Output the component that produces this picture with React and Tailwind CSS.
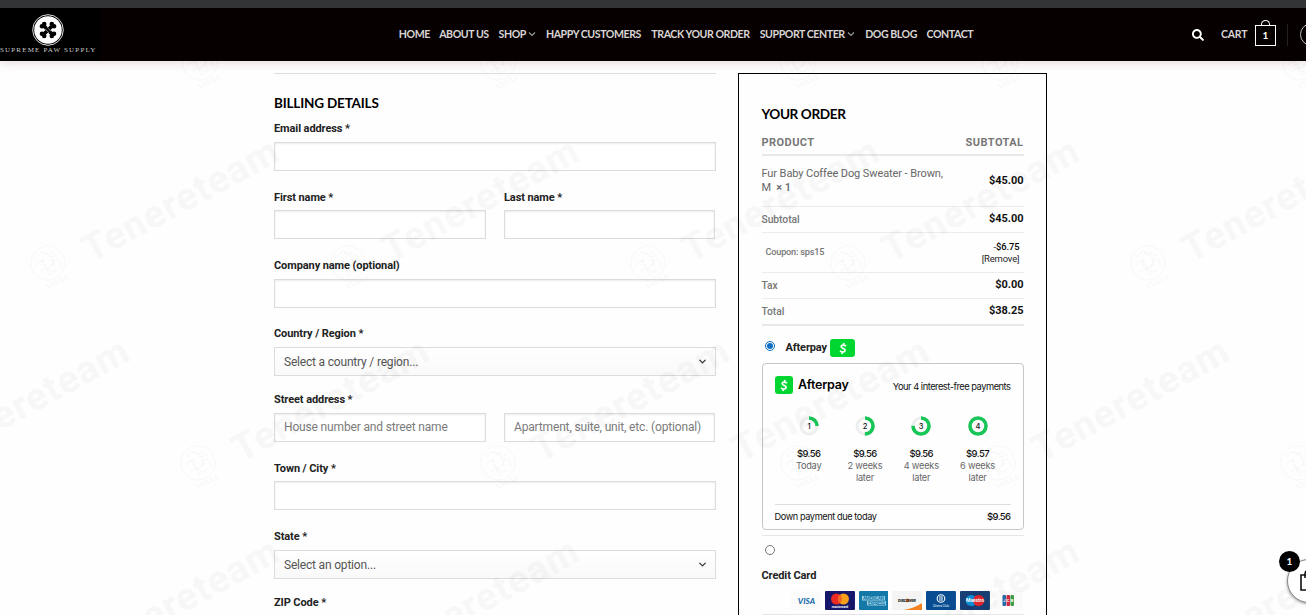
import { FaSearch } from 'react-icons/fa'
import { ChevronDown } from 'lucide-react'

const navItems = [
  { label: 'HOME', width: 'w-[30px]' },
  { label: 'ABOUT US', width: 'w-[49px]' },
  { label: 'SHOP', width: 'w-[27px]', menu: true },
  { label: 'HAPPY CUSTOMERS', width: 'w-[95px]' },
  { label: 'TRACK YOUR ORDER', width: 'w-[98px]' },
  { label: 'SUPPORT CENTER', width: 'w-[85px]', menu: true },
  { label: 'DOG BLOG', width: 'w-[51px]' },
  { label: 'CONTACT', width: 'w-[47px]' },
]

const payments = [
  { n: 1, amount: '$9.56', when: 'Today' },
  { n: 2, amount: '$9.56', when: '2 weeks', later: true },
  { n: 3, amount: '$9.56', when: '4 weeks', later: true },
  { n: 4, amount: '$9.57', when: '6 weeks', later: true },
]

const seals = [
  [200, 63], [498, 63], [798, 63], [1000, 63], [1300, 63],
  [48, 263], [348, 263], [648, 263], [848, 263], [1148, 263],
  [198, 463], [498, 463], [798, 463], [998, 463], [1298, 463],
]

const marks = [
  [91, 263], [391, 263], [691, 263], [891, 263], [1191, 263],
  [-59, 463], [241, 463], [541, 463], [741, 463], [1041, 463],
  [91, 663], [391, 663], [891, 663], [1191, 663],
]

function Watermark() {
  return (
    <svg className="pointer-events-none absolute left-0 top-[61px]" width="1306" height="554" viewBox="0 61 1306 554">
      {marks.map(([x, y]) => (
        <text key={`${x}-${y}`} x={x} y={y} transform={`rotate(-28.5 ${x} ${y})`} textLength="217" fontSize="38" fontWeight="700" fontFamily="Roboto, sans-serif" fill="#000" opacity="0.024">
          Tenereteam
        </text>
      ))}
      {seals.map(([x, y]) => (
        <g key={`${x}-${y}`} transform={`translate(${x} ${y})`} fill="none" stroke="#000" strokeWidth="1" opacity="0.035">
          <circle r="17" strokeDasharray="2 1" />
          <path d="M-11 -6q4 -8 10 -3t10 0M-12 2q6 -8 9 0t8 -2 8 4M-7 9q4 -7 8 -2t8 -1M-4 -11q4 3 9 0M-5 -4v7M4 -5l2 8M-2 6l4 7" strokeDasharray="4 1" />
          <path d="M-2 23l22 -11M0 25l20 -10" strokeDasharray="3 2" />
        </g>
      ))}
    </svg>
  )
}

function Header() {
  return (
    <header className="relative z-10 border-t-8 border-[#333435] bg-[#060000] shadow-[0_1px_10px_rgba(90,20,20,0.18)]">
      <div className="flex h-[53px] items-center overflow-hidden font-[Lato,sans-serif] text-[10.6px] font-bold text-[#d9d5d5]">
        <div className="flex h-full w-[100px] shrink-0 flex-col bg-black pt-[6px]">
          <svg width="32" height="32" viewBox="0 0 32 32" className="ml-8 shrink-0">
            <circle cx="16" cy="16" r="15.3" fill="#000" stroke="#ddd" strokeWidth="1" />
            <circle cx="16" cy="16" r="13.8" fill="#fff" />
            <path d="M11 11l10 10M21 11l-10 10" stroke="#000" strokeWidth="3.8" />
            <g fill="#000">
              <circle cx="10" cy="12.2" r="2.3" /><circle cx="12.2" cy="10" r="2.3" />
              <circle cx="19.8" cy="10" r="2.3" /><circle cx="22" cy="12.2" r="2.3" />
              <circle cx="10" cy="19.8" r="2.3" /><circle cx="12.2" cy="22" r="2.3" />
              <circle cx="19.8" cy="22" r="2.3" /><circle cx="22" cy="19.8" r="2.3" />
            </g>
            <path d="M13 14.8l4.2 4.2M14.8 13l4.2 4.2" stroke="#fff" strokeWidth=".5" />
          </svg>
          <span className="mt-px whitespace-nowrap font-['Liberation_Serif',serif] text-[7px] font-normal leading-[7px] tracking-[1.17px] text-[#c8c8c8]">SUPREME PAW SUPPLY</span>
        </div>
        <nav className="ml-[298.8px] flex shrink-0 items-center gap-[10.4px]">
          {navItems.map((item) => (
            <a key={item.label} href="#" className="flex shrink-0 items-center whitespace-nowrap tracking-[-0.44px]">
              <span className={item.width}>{item.label}</span>
              {item.menu && (
                <svg className="ml-[2px] shrink-0" width="8" height="6" viewBox="0 0 8 6" fill="none" stroke="#999" strokeWidth="1.2">
                  <path d="M1 1.5l3 3 3-3" />
                </svg>
              )}
            </a>
          ))}
        </nav>
        <div className="ml-auto flex w-[115px] shrink-0 items-center">
          <FaSearch className="ml-px h-3 w-3 shrink-0 text-white" />
          <span className="ml-[17px] w-[26px] shrink-0 text-[10.5px] tracking-[-0.2px]">CART</span>
          <div className="ml-2 flex shrink-0 flex-col items-center pb-1">
            <span className="h-[5px] w-[9px] rounded-t-full border border-b-0 border-white" />
            <span className="flex h-[21px] w-[21px] items-center justify-center border border-white text-[10px] text-white">1</span>
          </div>
          <span className="ml-[11px] h-[22px] w-px shrink-0 bg-[#222]" />
          <span className="ml-[12px] h-[23px] w-[23px] shrink-0 rounded-full border border-[#bbb]" />
        </div>
      </div>
    </header>
  )
}

const inputClass = 'h-[29px] w-full border border-[#dcdcdc] bg-white px-[9px] pb-[2px] text-[12px] tracking-[-0.16px] text-[#555] shadow-[inset_0_1px_2px_rgba(0,0,0,0.08)] placeholder:text-[#7b7b7b]'

function Field({ label, className, children }) {
  return (
    <div className={`flex flex-col justify-between ${className}`}>
      <label className="whitespace-nowrap pt-px text-[11px] font-bold leading-4 tracking-[-0.09px] text-[#222]">{label}</label>
      {children}
    </div>
  )
}

function SelectBox({ text }) {
  return (
    <button className="flex h-[29px] w-full items-center justify-between border border-[#dcdcdc] bg-linear-to-b from-white to-[#f9f9f9] pl-[9px] pr-[7px] text-[12px] tracking-[-0.19px] text-[#555]">
      {text}
      <ChevronDown className="h-[11px] w-[11px] text-[#333]" strokeWidth={2.7} />
    </button>
  )
}

function BillingForm() {
  return (
    <section className="w-[442px] shrink-0 border-t border-[#dedede]">
      <h3 className="mt-[19px] h-[27px] font-[Lato,sans-serif] text-[13.5px] font-bold leading-[20px] tracking-[-0.18px] text-black">BILLING DETAILS</h3>
      <Field label="Email address *" className="h-[51px]"><input className={inputClass} /></Field>
      <div className="mt-[18px] flex gap-[18px]">
        <Field label="First name *" className="h-[50px] w-[212px]"><input className={inputClass} /></Field>
        <Field label="Last name *" className="h-[50px] w-[211px]"><input className={inputClass} /></Field>
      </div>
      <Field label="Company name (optional)" className="mt-[18px] h-[51px]"><input className={inputClass} /></Field>
      <Field label="Country / Region *" className="mt-[17px] h-[51px]"><SelectBox text="Select a country / region..." /></Field>
      <div className="mt-[15px] flex items-end gap-[18px]">
        <Field label="Street address *" className="h-[51px] w-[212px]"><input className={inputClass} placeholder="House number and street name" /></Field>
        <input className={`${inputClass} max-w-[211px]`} placeholder="Apartment, suite, unit, etc. (optional)" />
      </div>
      <Field label="Town / City *" className="mt-[18px] h-[50px]"><input className={inputClass} /></Field>
      <Field label="State *" className="mt-[18px] h-[51px]"><SelectBox text="Select an option..." /></Field>
      <Field label="ZIP Code *" className="mt-[15px] h-[51px]"><input className={inputClass} /></Field>
    </section>
  )
}

function TotalRow({ label, value, className }) {
  return (
    <div className={`flex items-center justify-between border-b ${className}`}>
      <span className="text-[10.3px] font-medium tracking-[-0.05px] text-[#777]">{label}</span>
      <span className="text-[11px] font-bold tracking-[-0.05px] text-[#111]">{value}</span>
    </div>
  )
}

function CashIcon({ width, height }) {
  return (
    <span className={`flex shrink-0 items-center justify-center rounded-[3px] bg-[#00d632] ${width} ${height}`}>
      <svg width="10" height="13" viewBox="0 0 10 13" fill="none" stroke="#fff" strokeWidth="1.7">
        <path d="M8 4.2C6.6 2.9 3.4 2.6 3.1 4.5c-.3 2.2 4.2 1.5 4 3.9-.2 2-3.3 2.1-5.1.5M5.9 1l-.4 1.8M4.3 10.2 3.9 12" />
      </svg>
    </span>
  )
}

function Installment({ n, amount, when, later }) {
  const length = 2 * Math.PI * 8
  return (
    <div className="flex w-[56.3px] shrink-0 flex-col items-center text-center">
      <svg width="20" height="20" viewBox="0 0 20 20">
        <circle cx="10" cy="10" r="8" fill="none" stroke="#eee" strokeWidth="3" />
        <circle cx="10" cy="10" r="8" fill="none" stroke="#18c557" strokeWidth="3.6" strokeDasharray={`${(length * n) / 4} ${length}`} transform="rotate(-90 10 10)" />
        <text x="10" y="13" textAnchor="middle" fontSize="7.5" fontWeight="500" fill="#111">{n}</text>
      </svg>
      <p className="mt-3 text-[9.5px] font-medium leading-[12px] tracking-[-0.6px] text-[#111]">{amount}</p>
      <p className="whitespace-nowrap text-[9.2px] leading-[12px] tracking-[-0.2px] text-[#666]">
        {when}
        {later && <><br />later</>}
      </p>
    </div>
  )
}

function AfterpayCard() {
  return (
    <div className="mt-[5px] h-[167px] w-[262px] rounded border border-[#c6c6c6] px-3 font-[Inter,sans-serif]">
      <div className="mt-3 flex h-[18px] items-center">
        <CashIcon width="w-[18px]" height="h-[18px]" />
        <span className="ml-[5.5px] mt-px text-[12.5px] font-semibold tracking-[-0.22px] text-black">Afterpay</span>
        <span className="ml-auto mt-[3px] whitespace-nowrap text-[9.3px] tracking-[-0.48px] text-[#111]">Your 4 interest-free payments</span>
      </div>
      <div className="ml-[6px] mt-[22px] flex h-[88px]">
        {payments.map((p) => <Installment key={p.n} {...p} />)}
      </div>
      <div className="flex h-[25px] items-center justify-between border-t border-[#ddd] text-[9.2px] tracking-[-0.41px] text-[#111]">
        <span>Down payment due today</span>
        <span className="text-[9.5px] font-medium tracking-[-0.6px]">$9.56</span>
      </div>
    </div>
  )
}

function CardLogos() {
  return (
    <div className="ml-[29.5px] mt-[6px] flex gap-[3.8px]">
      <svg width="30" height="19" viewBox="0 0 30 19">
        <rect width="30" height="19" rx="1" fill="#fbfbfb" />
        <text x="15.5" y="13" textAnchor="middle" fontFamily="Lato, sans-serif" fontSize="8.2" fontStyle="italic" fontWeight="900" fill="#1f6fae">VISA</text>
      </svg>
      <svg width="30" height="19" viewBox="0 0 30 19">
        <rect width="30" height="19" rx="1" fill="#16166b" />
        <circle cx="11.5" cy="8" r="5.5" fill="#eb2a23" />
        <circle cx="18.5" cy="8" r="5.5" fill="#f79e1b" />
        <path d="M15 3.8a5.5 5.5 0 0 1 0 8.4a5.5 5.5 0 0 1 0-8.4" fill="#f26322" />
        <text x="15" y="17" textAnchor="middle" fontSize="3.2" fontWeight="700" fill="#fff">mastercard</text>
      </svg>
      <svg width="30" height="19" viewBox="0 0 30 19">
        <rect width="30" height="19" rx="1" fill="#1479a8" />
        <rect x="3" y="5" width="23" height="4.5" fill="#9bd3e8" />
        <rect x="8" y="10" width="19" height="4.5" fill="#9bd3e8" />
        <text x="14.5" y="9" textAnchor="middle" textLength="21" fontSize="4.5" fontWeight="700" fill="#1479a8">AMERICAN</text>
        <text x="17.5" y="14" textAnchor="middle" textLength="17" fontSize="4.5" fontWeight="700" fill="#1479a8">EXPRESS</text>
      </svg>
      <svg width="30" height="19" viewBox="0 0 30 19">
        <rect width="30" height="19" rx="1" fill="#f4f4f4" />
        <path d="M12 19q11-2 18-7v7z" fill="#f58220" />
        <circle cx="15.5" cy="9.4" r="1.8" fill="#e9792b" />
        <text x="15" y="11" textAnchor="middle" textLength="18" fontSize="4" fontWeight="900" fill="#222">DISCOVER</text>
      </svg>
      <svg width="30" height="19" viewBox="0 0 30 19">
        <rect width="30" height="19" rx="1" fill="#0a4c92" />
        <circle cx="15" cy="7.5" r="3.8" fill="none" stroke="#fff" strokeWidth="1.1" />
        <path d="M14 5v5M16 5v5" stroke="#fff" strokeWidth="1" />
        <text x="15" y="16" textAnchor="middle" textLength="16" fontSize="3.6" fill="#dce9f5">Diners Club</text>
      </svg>
      <svg width="30" height="19" viewBox="0 0 30 19">
        <rect width="30" height="19" rx="1" fill="#173f75" />
        <circle cx="11.3" cy="9.5" r="5.6" fill="#0a8fd8" />
        <circle cx="18.7" cy="9.5" r="5.6" fill="#e2252b" />
        <text x="15" y="11.5" textAnchor="middle" textLength="18" fontSize="5" fontWeight="700" fill="#fff">Maestro</text>
      </svg>
      <svg width="30" height="19" viewBox="0 0 30 19">
        <rect width="30" height="19" rx="1" fill="#fafafa" />
        <rect x="8.5" y="4" width="3.5" height="11" rx="1" fill="#2667a8" />
        <rect x="12.5" y="4" width="3.5" height="11" rx="1" fill="#cf2540" />
        <rect x="16.5" y="4" width="3.5" height="11" rx="1" fill="#3d9b46" />
        <text x="14.3" y="10.8" textAnchor="middle" textLength="10" fontSize="4" fontWeight="700" fill="#fff">JCB</text>
      </svg>
    </div>
  )
}

function OrderBox() {
  return (
    <section className="ml-[22px] h-[600px] w-[309px] shrink-0 border border-black pl-[22.5px]">
      <h3 className="mt-[30px] font-[Lato,sans-serif] text-[13.6px] font-bold leading-[20px] tracking-[-0.4px] text-black">YOUR ORDER</h3>
      <div className="w-[262px]">
        <div className="flex h-[32px] items-center justify-between border-b-2 border-[#e9e9e9] pt-[9px] text-[11px] font-bold tracking-[0.45px] text-[#777]">
          <span>PRODUCT</span>
          <span>SUBTOTAL</span>
        </div>
        <div className="flex h-[51px] items-center justify-between border-b border-[#ececec]">
          <p className="w-[190px] text-[11px] leading-[14px] tracking-[-0.09px] text-[#666]">Fur Baby Coffee Dog Sweater - Brown, M &nbsp;<strong className="font-medium">× 1</strong></p>
          <span className="text-[11px] font-bold tracking-[-0.05px] text-[#111]">$45.00</span>
        </div>
        <TotalRow label="Subtotal" value="$45.00" className="h-[26px] border-[#ececec]" />
        <div className="flex h-[40px] items-center justify-between border-b border-[#ececec] px-1">
          <span className="pb-px text-[9.2px] font-medium tracking-[-0.22px] text-[#777]">Coupon: sps15</span>
          <p className="text-right text-[9.4px] leading-[12px] tracking-[-0.1px] text-[#222]">
            -<span className="font-medium text-black">$6.75</span><br />[Remove]
          </p>
        </div>
        <TotalRow label="Tax" value="$0.00" className="h-[26px] border-[#ececec]" />
        <TotalRow label="Total" value="$38.25" className="h-[27px] border-b-2 border-[#e9e9e9]" />
      </div>
      <div className="mt-[12px] flex h-[20px] items-center">
        <span className="mb-[5px] ml-[3.5px] flex h-[10px] w-[10px] items-center justify-center rounded-full border border-[#0a6fc2]">
          <span className="h-[6px] w-[6px] rounded-full bg-[#0a6fc2]" />
        </span>
        <span className="ml-[10.5px] w-[44.5px] text-[11px] font-bold tracking-[-0.15px] text-[#222]">Afterpay</span>
        <CashIcon width="w-[25px]" height="h-[18px]" />
      </div>
      <AfterpayCard />
      <div className="mt-[5px] w-[262px] border-t border-[#e6e6e6]">
        <span className="ml-[3.5px] mt-[9px] block h-[10px] w-[10px] rounded-full border border-[#777]" />
        <p className="mt-[12px] text-[11px] font-bold leading-[18px] tracking-[-0.1px] text-[#222]">Credit Card</p>
        <CardLogos />
        <div className="mt-1 border-t border-[#e6e6e6]" />
      </div>
    </section>
  )
}

function FloatingCart() {
  return (
    <div className="absolute left-[1287px] top-[559px] h-[44px] w-[44px] rounded-full border border-[#888] bg-white shadow-[0_1px_3px_rgba(0,0,0,0.4)]">
      <svg className="absolute left-[11px] top-[9px]" width="20" height="24" viewBox="0 0 20 24" fill="none" stroke="#111" strokeWidth="1.6">
        <path d="M2 6h16v15H2zM6 9V5a4 4 0 0 1 8 0v4" />
      </svg>
      <span className="absolute -left-[9px] -top-[9px] flex h-[21px] w-[21px] items-center justify-center rounded-full bg-black font-[Lato,sans-serif] text-[10px] font-bold text-white">1</span>
    </div>
  )
}

export default function App() {
  return (
    <div className="relative h-[615px] w-[1306px] overflow-hidden bg-[#fefefe] font-[Roboto,sans-serif]">
      <Header />
      <main className="ml-[274px] mt-3 flex items-start">
        <BillingForm />
        <OrderBox />
      </main>
      <Watermark />
      <FloatingCart />
    </div>
  )
}
